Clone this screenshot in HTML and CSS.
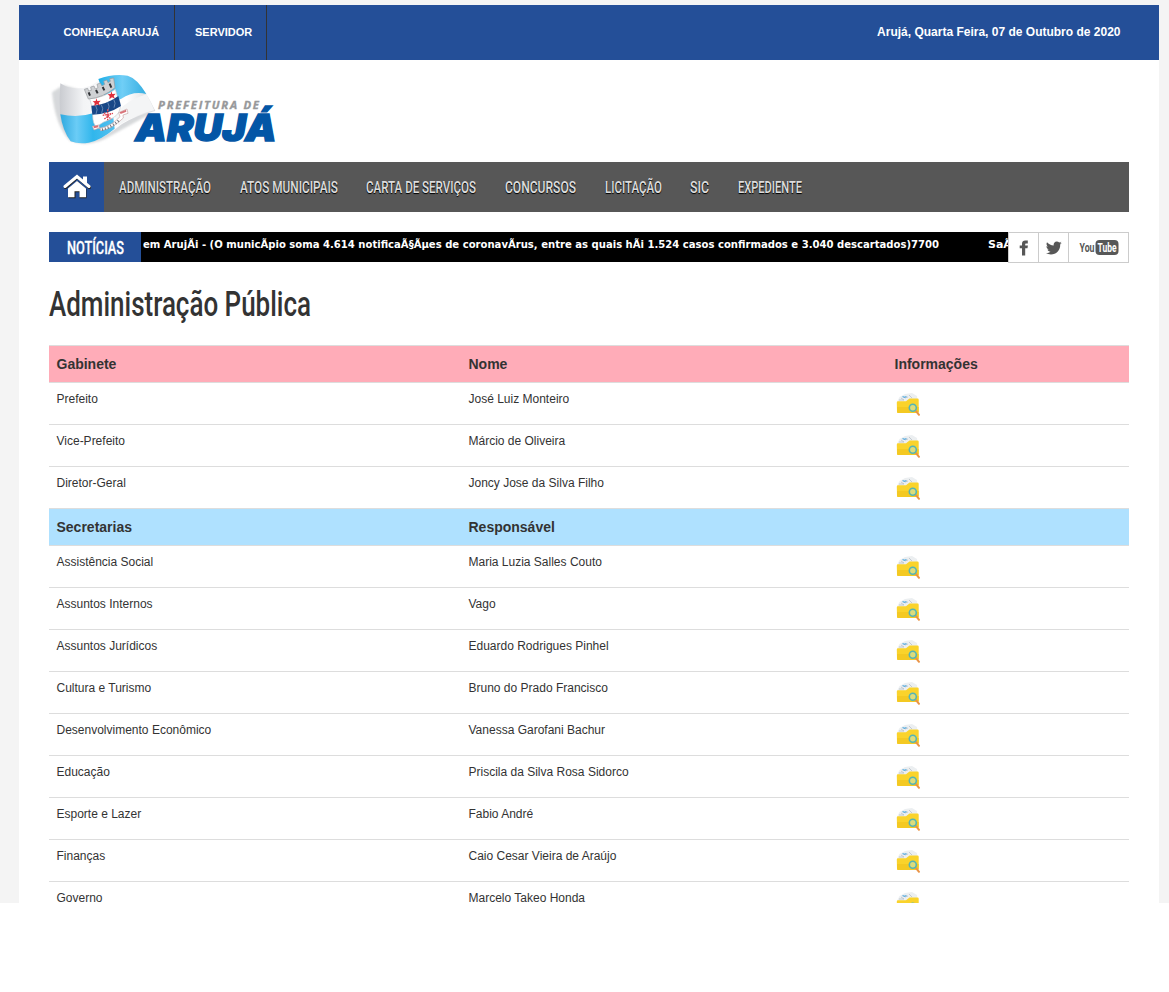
FILE: index.html
```html
<!DOCTYPE html>
<html lang="pt-BR">
<head>
<meta charset="utf-8">
<title>Prefeitura de Arujá</title>
<link rel="stylesheet" href="styles.css">
</head>
<body>
<svg class="defs" width="0" height="0">
  <symbol id="folder" viewBox="0 0 24 24">
    <path d="M1.500 9l2-4 5.500-3 7-1 5 3 .5 5v4H1z" fill="#eceff1"/>
    <path d="M5 6l3 2M13 3l3 3M3 8h5M9 6l3-1" stroke="#b9c0c8" stroke-width=".8" fill="none"/>
    <path d="M6.500 4.500l2 .8 2-.8" stroke="#58aade" stroke-width="1.200" fill="none"/>
    <path d="M.8 10.500Q.8 9.300 2 9.300H10L13.500 6.500H21.500q1.200 0 1.200 1.200V19.500q0 1.500-1.500 1.500H2.400Q1 21 1 19.800z" fill="#fad32b"/>
    <path d="M1 15h21.700v4.500q0 1.500-1.500 1.500H2.400Q1 21 1 19.800z" fill="#f4c922"/>
    <path d="M19.800 18.800l3.200 4" stroke="#eb9446" stroke-width="2" stroke-linecap="round"/>
    <circle cx="16.800" cy="15.800" r="3.500" fill="#dcdc7c" stroke="#55b5b4" stroke-width="1.600"/>
  </symbol>
</svg>
<div class="page">
  <div class="sheet">
    <header class="topbar">
      <nav class="toplinks"><a class="first">CONHEÇA ARUJÁ</a><a class="second">SERVIDOR</a></nav>
      <span class="date">Arujá, Quarta Feira, 07 de Outubro de 2020</span>
    </header>
    <div class="content">
      <svg class="logo" width="241" height="90" viewBox="27 0 723 270">
        <defs>
          <linearGradient id="cloth" x1="0" x2="1"><stop offset="0" stop-color="#c9cbd0"/><stop offset=".25" stop-color="#f3f4f6"/><stop offset=".7" stop-color="#fff"/><stop offset="1" stop-color="#d5d6d9"/></linearGradient>
          <linearGradient id="skyL" x1="0" x2="1"><stop offset="0" stop-color="#2fa9df"/><stop offset=".3" stop-color="#6bccf6"/><stop offset=".6" stop-color="#30b6ec"/><stop offset="1" stop-color="#54c1ef"/></linearGradient>
          <linearGradient id="skyR" x1="0" x2="1"><stop offset="0" stop-color="#1daee7"/><stop offset=".5" stop-color="#70cef6"/><stop offset="1" stop-color="#35aee1"/></linearGradient>
          <filter id="soft"><feGaussianBlur stdDeviation="3"/></filter>
        </defs>
        <path d="M36 82Q45 180 88 226Q150 252 216 210L335 145L300 130L70 60z" fill="#c9cccf" opacity=".75" filter="url(#soft)"/>
        <path d="M61 55Q102 82 151 62Q205 25 263 33Q300 42 346 138Q295 148 246 177Q192 220 160 229Q120 239 92 229Q62 190 60 147Q57 98 61 55z" fill="url(#cloth)"/>
        <path d="M175 42Q220 25 263 32Q291 40 319 87Q279 77 244 101L202 117z" fill="url(#skyR)"/>
        <path d="M61 148Q112 160 159 145L220 158L224 191Q182 226 146 233Q116 238 92 229Q68 198 61 148z" fill="url(#skyL)"/>
        <path d="M224 153Q250 110 319 88Q330 105 343 136Q289 148 236 181z" fill="#f4f5f6"/>
        <path d="M149 101Q190 99 226 73Q230 92 240 113Q246 145 215 161Q188 170 170 185Q158 178 158 150Q158 125 149 101z" fill="#fff" stroke="#c5c8ce" stroke-width="2"/>
        <path d="M154 122Q196 121 235 93L243 123Q205 148 157 149z" fill="#174787"/>
        <path d="M167 122q8 12 1 25M184 119q8 12 1 25M203 112q8 11 1 25M221 103q8 11 1 25" fill="none" stroke="#6386b4" stroke-width="3"/>
        <path fill="#cfd1d4" stroke="#95989c" stroke-width="2" d="M133 73l10-3 3 8 8-2-2-10 10-3 4 9 8-4-3-10 10-4 5 9 8-5-3-9 9-4 4 8 7-4-2-8 12-2 4 29q-37 31-80 34z"/>
        <path d="M146 82l4 10M168 75l5 10M188 66l5 10M209 56l5 12" stroke="#303236" stroke-width="6"/>
        <path d="M169 100l3 8 10-1-6 7 4 8-9-4-8 6 1-10-6-5 9-1zM214 79l3 8 10-1-6 7 4 8-9-4-8 6 1-10-6-5 9-1z" fill="#df303c"/>
        <path d="M203 133v35M188 151l31-6M193 162l20-16M192 143l22 20" stroke="#de4b58" stroke-width="4" stroke-dasharray="5 2"/>
        <path d="M157 184l20-4 1 10q37-7 62-35l-4-12 25-11 3 13-15 5 1 9q-35 34-68 38l-2-9-18 7z" fill="#fff" stroke="#c9a4a5" stroke-width="2"/>
        <path d="M160 184l14-3 1 6-13 3zM239 142l19-8 1 6-17 7z" fill="#d9747a"/>
        <path d="M186 194q30-8 54-30" fill="none" stroke="#77767e" stroke-width="8" stroke-dasharray="3 6"/>
        <text class="logo-small" x="354" y="133" textLength="303">PREFEITURA DE</text>
        <text class="logo-big" x="286" y="227" textLength="424" lengthAdjust="spacingAndGlyphs">ARUJÁ</text>
      </svg>
      <nav class="menu">
        <a class="home"><svg width="28" height="26" viewBox="0 0 28 26">
          <g class="house-shadow"><path d="M2.500 13.500L14.500 3l12 10.500"/><path d="M5.500 15L14.500 7l9 8V24.300h-7v-6h-4v6h-7z"/></g>
          <g class="house"><path class="roof" d="M2 12.500L14 2.500l12 10"/><path d="M5 14.500L14 7l9 7.500V23.300h-6.500v-6h-5v6H5zM20 2.500h4v8l-4-4z"/></g>
        </svg></a>
        <svg class="narrow" width="92" height="50"><text y="31" textLength="92" lengthAdjust="spacingAndGlyphs">ADMINISTRAÇÃO</text></svg>
        <svg class="narrow" width="98" height="50"><text y="31" textLength="98" lengthAdjust="spacingAndGlyphs">ATOS MUNICIPAIS</text></svg>
        <svg class="narrow" width="110" height="50"><text y="31" textLength="110" lengthAdjust="spacingAndGlyphs">CARTA DE SERVIÇOS</text></svg>
        <svg class="narrow" width="71" height="50"><text y="31" textLength="71" lengthAdjust="spacingAndGlyphs">CONCURSOS</text></svg>
        <svg class="narrow" width="57" height="50"><text y="31" textLength="57" lengthAdjust="spacingAndGlyphs">LICITAÇÃO</text></svg>
        <svg class="narrow" width="19" height="50"><text y="31" textLength="19" lengthAdjust="spacingAndGlyphs">SIC</text></svg>
        <svg class="narrow" width="64" height="50"><text y="31" textLength="64" lengthAdjust="spacingAndGlyphs">EXPEDIENTE</text></svg>
      </nav>
      <div class="news">
        <div class="news-label"><svg width="57" height="30"><text y="22" textLength="57" lengthAdjust="spacingAndGlyphs">NOTÍCIAS</text></svg></div>
        <div class="ticker">
          <svg width="796" height="24"><text y="16" textLength="796" lengthAdjust="spacingAndGlyphs">em ArujÃi - (O municÃpio soma 4.614 notificaÃ§Ãµes de coronavÃrus, entre as quais hÃi 1.524 casos confirmados e 3.040 descartados)7700</text></svg>
          <svg width="26" height="24"><text y="16">SaÃ</text></svg>
        </div>
        <div class="social">
          <a><svg width="10" height="16" viewBox="0 0 10 16"><path d="M3 15.500V8.200H.7V5.400H3V3.800C3 1.500 4.300.6 6.300.6h2.500v2.800H7.200c-.8 0-1 .3-1 1v1h2.700l-.4 2.800H6.200v7.300z"/></svg></a>
          <a><svg width="16" height="14" viewBox="0 0 16 14"><path d="M15.800 1.800l-1.600 1.700C14.500 9.500 10 13.500 5 13.500c-1.900 0-3.600-.5-5-1.400 1.700.1 3.300-.3 4.500-1.300C3 10.700 1.900 9.800 1.500 8.500h1.400C1.400 8 .4 6.800.4 5.200l1.500.4C.5 4.500.1 2.700 1 1.200c1.700 2 4 3.200 6.700 3.300C7.200 2.200 8.800.5 10.800.5c1 0 1.800.4 2.400 1l2.100-.8-1.400 1.800z"/></svg></a>
          <a class="wide"><svg width="40" height="16" viewBox="0 0 40 16"><text x="0.500" y="12" textLength="15" lengthAdjust="spacingAndGlyphs">You</text><rect x="16.500" y="0" width="23" height="15" rx="4"/><text class="tube" x="18.500" y="12" textLength="19" lengthAdjust="spacingAndGlyphs">Tube</text></svg></a>
        </div>
      </div>
      <h1><svg width="264" height="50"><text y="33" textLength="262" lengthAdjust="spacingAndGlyphs">Administração Pública</text></svg></h1>
      <div class="table">
        <div class="row head pink"><span>Gabinete</span><span>Nome</span><span>Informações</span></div>
        <div class="row"><span>Prefeito</span><span>José Luiz Monteiro</span><svg><use href="#folder"/></svg></div>
        <div class="row"><span>Vice-Prefeito</span><span>Márcio de Oliveira</span><svg><use href="#folder"/></svg></div>
        <div class="row"><span>Diretor-Geral</span><span>Joncy Jose da Silva Filho</span><svg><use href="#folder"/></svg></div>
        <div class="row head blue"><span>Secretarias</span><span>Responsável</span></div>
        <div class="row"><span>Assistência Social</span><span>Maria Luzia Salles Couto</span><svg><use href="#folder"/></svg></div>
        <div class="row"><span>Assuntos Internos</span><span>Vago</span><svg><use href="#folder"/></svg></div>
        <div class="row"><span>Assuntos Jurídicos</span><span>Eduardo Rodrigues Pinhel</span><svg><use href="#folder"/></svg></div>
        <div class="row"><span>Cultura e Turismo</span><span>Bruno do Prado Francisco</span><svg><use href="#folder"/></svg></div>
        <div class="row"><span>Desenvolvimento Econômico</span><span>Vanessa Garofani Bachur</span><svg><use href="#folder"/></svg></div>
        <div class="row"><span>Educação</span><span>Priscila da Silva Rosa Sidorco</span><svg><use href="#folder"/></svg></div>
        <div class="row"><span>Esporte e Lazer</span><span>Fabio André</span><svg><use href="#folder"/></svg></div>
        <div class="row"><span>Finanças</span><span>Caio Cesar Vieira de Araújo</span><svg><use href="#folder"/></svg></div>
        <div class="row"><span>Governo</span><span>Marcelo Takeo Honda</span><svg><use href="#folder"/></svg></div>
      </div>
    </div>
  </div>
</div>
</body>
</html>
```

FILE: styles.css
```css
* { box-sizing: border-box; }
html { background: #fff; }
body { margin: 0; font-family: "Liberation Sans", Arial, sans-serif; font-size: 12px; color: #333; overflow: hidden; }
svg { display: block; flex: none; }
.defs { position: absolute; }
.page { height: 903px; overflow: hidden; background: #f4f4f4; padding: 5px 10px 0 19px; }
.sheet { background: #fff; min-height: 898px; }
.topbar { height: 55px; background: #244f98; color: #fff; display: flex; justify-content: space-between; font-weight: bold; line-height: 54px; }
.toplinks { display: flex; font-size: 11px; }
.toplinks a { border-right: 1px solid #333; white-space: nowrap; }
.first { width: 156px; padding-left: 44.5px; }
.second { width: 92px; padding-left: 20px; }
.date { padding-right: 38.5px; font-size: 12px; }
.content { padding: 5px 30px 0; }
.logo { overflow: visible; }
.logo-small { font: italic 700 34px "Open Sans", sans-serif; fill: #97989a; stroke: #97989a; stroke-width: 1px; }
.logo-big { font: italic 900 110px Inter, sans-serif; fill: #0356a6; stroke: #0356a6; stroke-width: 4px; }
.menu { margin-top: 7px; height: 50px; background: #575757; display: flex; gap: 28.7px; }
.home { width: 55px; height: 50px; background: #244f98; padding: 12px 0 0 14px; margin-right: -13.7px; }
.house { fill: #fff; }
.roof { fill: none; stroke: #fff; stroke-width: 3px; stroke-linecap: round; }
.house-shadow { fill: #222; }
.house-shadow path:first-child { fill: none; stroke: #222; stroke-width: 3px; stroke-linecap: round; }
.narrow { overflow: visible; font: 500 17px Roboto, sans-serif; fill: #ddd; }
.narrow text { text-shadow: 0 1px 1px #000; }
.news { margin-top: 20px; height: 31px; display: flex; }
.news-label { width: 92px; height: 30px; padding-left: 18px; background: #244f98; font: 500 19px Roboto, sans-serif; fill: #fff; stroke: #fff; stroke-width: .3px; }
.news-label svg { overflow: visible; }
.ticker { width: 867px; height: 30px; background: #000; padding-left: 2px; display: flex; gap: 49px; overflow: hidden; font: bold 11px "DejaVu Sans", Verdana, sans-serif; fill: #fff; }
.social { display: flex; width: 121px; height: 31px; border: 1px solid #ccc; fill: #575757; }
.social a { width: 30px; display: flex; align-items: center; justify-content: center; border-right: 1px solid #ccc; padding-top: 1px; }
.social .wide { flex: 1; border-right: 0; }
.social text { font: 700 13px Roboto, sans-serif; }
.social .tube { fill: #fff; }
h1 { margin: 20px 0 0; height: 62px; font: 500 35px Roboto, sans-serif; fill: #333; }
h1 svg { overflow: visible; }
.row { height: 42px; border-top: 1px solid #ddd; padding: 8px 8px 0 7.5px; display: grid; grid-template-columns: 412px 426px 1fr; line-height: 17px; }
.row svg { width: 24px; height: 24px; margin: 1px 0 0 1px; }
.head { height: 37px; font-size: 14px; font-weight: bold; line-height: 20px; }
.pink { background: #ffacb8; }
.blue { background: #afe1ff; }
```
